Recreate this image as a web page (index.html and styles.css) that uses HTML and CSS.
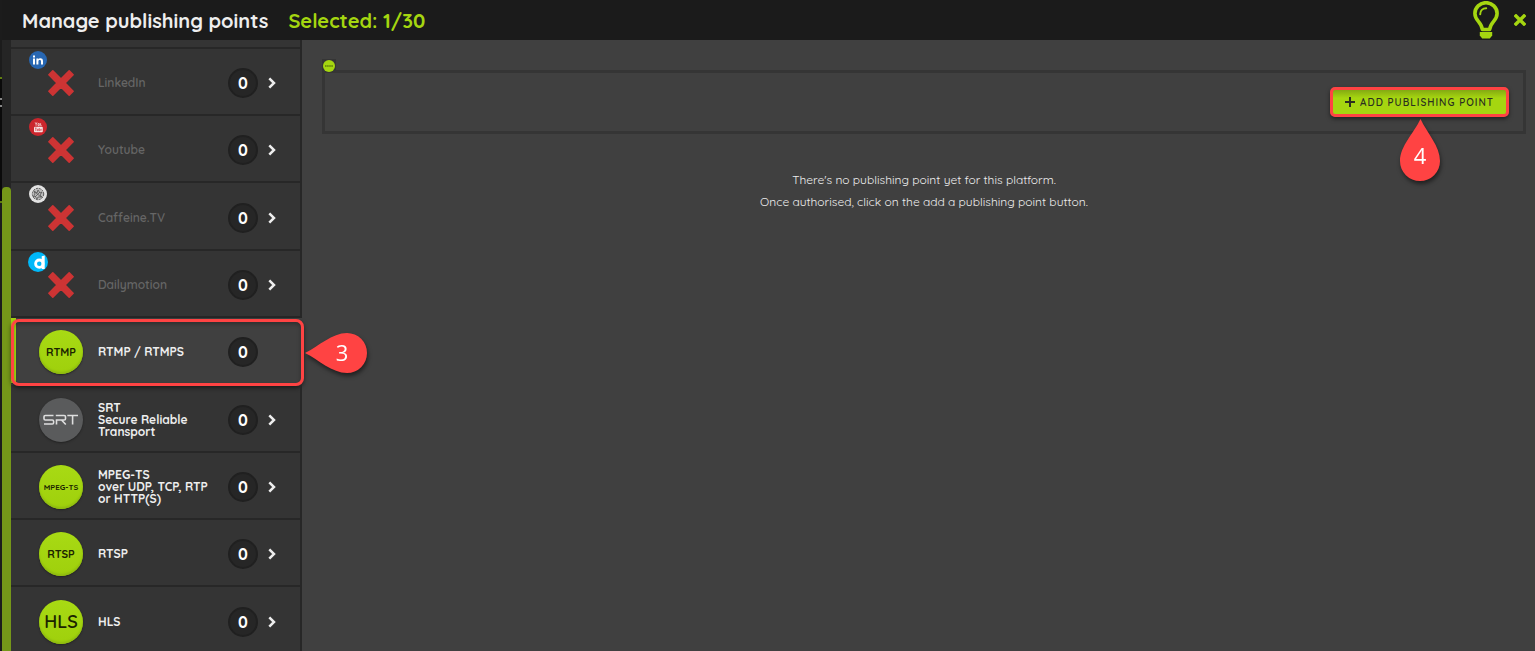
FILE: index.html
```html
<!DOCTYPE html>
<html lang="en">
<head>
  <meta charset="UTF-8">
  <meta name="viewport" content="width=device-width, initial-scale=1">
  <title>Manage publishing points</title>
  <link rel="stylesheet" href="styles.css">
</head>
<body>
  <!-- Shared icons -->
  <svg class="defs" aria-hidden="true">
    <symbol id="cross" viewBox="0 0 26 26">
      <path d="M4.8.9 13 9 21.2.9 25.1 4.8 17 13 25.1 21.2 21.2 25.1 13 17 4.8 25.1.9 21.2 9 13 .9 4.8Z" fill="#cd3434" stroke="#cd3434" stroke-width="1.6" stroke-linejoin="round"/>
    </symbol>
    <symbol id="chevron" viewBox="0 0 8 12">
      <path d="M1.3 1.3 6 6 1.3 10.7" fill="none" stroke="currentColor" stroke-width="2.5"/>
    </symbol>
  </svg>

  <div class="backdrop"></div>
  <div class="dialog">
    <header class="header">
      <h1>Manage publishing points</h1>
      <span class="selected-count">Selected: 1/30</span>
      <button class="icon-btn help" aria-label="Help">
        <svg width="26" height="38" viewBox="0 0 26 38">
          <path d="M9.3 28.5C8.8 21 1.9 20 1.9 12.4a11.1 10.7 0 0 1 22.2 0C24.1 20 17.2 21 16.7 28.5Z" fill="none" stroke="currentColor" stroke-width="3.6" stroke-linejoin="round"/>
          <path d="M7.2 13.2c0-3.4 2.4-5.8 6-5.9" fill="none" stroke="currentColor" stroke-width="2" stroke-linecap="round"/>
          <path d="M6.8 31h12.4v3.4l-2.4 3.2H9.2l-2.4-3.2Z" fill="currentColor"/>
        </svg>
      </button>
      <button class="icon-btn close" aria-label="Close">
        <svg width="12" height="12" viewBox="0 0 12 12">
          <path d="M2 2l8 8M10 2l-8 8" fill="none" stroke="currentColor" stroke-width="3.4" stroke-linecap="square"/>
        </svg>
      </button>
    </header>

    <div class="content">
      <div class="scrollbar"><div class="thumb"></div></div>

      <!-- Platform list -->
      <nav class="platforms">
        <div class="list-top"></div>
        <button class="platform disabled">
          <svg class="brand" viewBox="0 0 18 18">
            <circle cx="9" cy="9" r="9" fill="#2867b2"/>
            <path d="M4 7.4h2v6H4zM4 4.6h2v1.8H4zM7.4 7.4h1.9v.9c.9-1.5 4.7-1.7 4.7 1.6v3.5h-2v-3c0-2-2.6-1.8-2.6 0v3h-2z" fill="#fff"/>
          </svg>
          <span class="logo"><svg class="cross"><use href="#cross"/></svg></span>
          <span class="name">LinkedIn</span>
          <span class="count">0</span>
          <svg class="chevron"><use href="#chevron"/></svg>
        </button>
        <button class="platform disabled">
          <svg class="brand" viewBox="0 0 18 18">
            <circle cx="9" cy="9" r="9" fill="#cb262d"/>
            <path d="M6.2 4.4l.9 1.7v1.7M8 4.4l-.9 1.7M9 5.6h1.3v2H9zM11.6 5.2v2.4h1" fill="none" stroke="#f6dcdc" stroke-width=".8"/>
            <rect x="5" y="8.7" width="8.8" height="5.5" rx="1" fill="#f6e4e4"/>
            <path d="M6 10h1.6M6.8 10v3M8.4 10.8v1.8h.9v-1.8M10.3 10v2.6h.9v-1.4M12.2 10.8v1.8" fill="none" stroke="#cb262d" stroke-width=".6"/>
          </svg>
          <span class="logo"><svg class="cross"><use href="#cross"/></svg></span>
          <span class="name">Youtube</span>
          <span class="count">0</span>
          <svg class="chevron"><use href="#chevron"/></svg>
        </button>
        <button class="platform disabled">
          <svg class="brand" viewBox="0 0 18 18">
            <circle cx="9" cy="9" r="9" fill="#e2e2e2"/>
            <circle cx="9" cy="9" r="5.7" fill="#bbb" stroke="#555" stroke-width="1" stroke-dasharray="2 1"/>
            <path d="M5 6l3 2 1-3 2 3 2-1-2 3 2 2-4 0-1 2-2-3-2 1 2-3zM6 12l5-5M6 7l6 5" fill="none" stroke="#555" stroke-width=".8"/>
          </svg>
          <span class="logo"><svg class="cross"><use href="#cross"/></svg></span>
          <span class="name">Caffeine.TV</span>
          <span class="count">0</span>
          <svg class="chevron"><use href="#chevron"/></svg>
        </button>
        <button class="platform disabled">
          <svg class="brand large" viewBox="0 0 20 20">
            <circle cx="10" cy="10" r="10" fill="#00b8f9"/>
            <circle cx="11.3" cy="11.7" r="3.7" fill="none" stroke="#fff" stroke-width="2.8"/>
            <path d="M13.7 4.2l3-.6v13.4h-3z" fill="#fff"/>
          </svg>
          <span class="logo"><svg class="cross"><use href="#cross"/></svg></span>
          <span class="name">Dailymotion</span>
          <span class="count">0</span>
          <svg class="chevron"><use href="#chevron"/></svg>
        </button>
        <button class="platform active">
          <span class="logo round">RTMP</span>
          <span class="name">RTMP / RTMPS</span>
          <span class="count">0</span>
          <span class="outline"></span>
          <span class="callout left">
            <svg width="62" height="40" viewBox="0 0 62 40">
              <path d="M0 20C14 13 27 0 42 0a20 20 0 0 1 0 40C27 40 14 27 0 20Z" fill="#ff4343"/>
            </svg>
            <span class="step">3</span>
          </span>
        </button>
        <button class="platform">
          <span class="logo round grey">
            <svg width="36" height="12" viewBox="0 0 36 12">
              <path d="M10.5 1.5H2.3q-1.3 0-1.3 1.3v1.9Q1 6 2.3 6h7q1.3 0 1.3 1.3v1.4q0 1.3-1.3 1.3H1M13.5 10.5V6h7.7q1.3 0 1.3-1.3V2.8q0-1.3-1.3-1.3h-8.4M18.5 6l4.3 4.5M24.3 1.5H35M29.6 1.5v9" fill="none" stroke="#dedede" stroke-width="1.6"/>
            </svg>
          </span>
          <span class="name">SRT<br>Secure Reliable<br>Transport</span>
          <span class="count">0</span>
          <svg class="chevron"><use href="#chevron"/></svg>
        </button>
        <button class="platform">
          <span class="logo round small">MPEG-TS</span>
          <span class="name">MPEG-TS<br>over UDP, TCP, RTP<br>or HTTP(S)</span>
          <span class="count">0</span>
          <svg class="chevron"><use href="#chevron"/></svg>
        </button>
        <button class="platform">
          <span class="logo round">RTSP</span>
          <span class="name">RTSP</span>
          <span class="count">0</span>
          <svg class="chevron"><use href="#chevron"/></svg>
        </button>
        <button class="platform">
          <span class="logo round big">HLS</span>
          <span class="name">HLS</span>
          <span class="count">0</span>
          <svg class="chevron"><use href="#chevron"/></svg>
        </button>
      </nav>

      <!-- Publishing points of the selected platform -->
      <main class="points">
        <div class="toolbar">
          <svg class="tab" viewBox="0 0 14 14">
            <circle cx="7" cy="7" r="6" fill="#a5d610"/>
            <path d="M3 7h8" stroke="#5f7d08" stroke-width="1.6" stroke-dasharray="1.6 .5"/>
          </svg>
          <button class="add-btn">
            <svg width="10" height="10" viewBox="0 0 10 10"><path d="M5 0v10M0 5h10" stroke="currentColor" stroke-width="2"/></svg>
            Add publishing point
            <span class="callout below">
              <svg width="40" height="62" viewBox="0 0 40 62">
                <path d="M20.5 0C27 14 40 27 40 42a20 20 0 0 1-40 0C0 27 14 14 20.5 0Z" fill="#ff4343"/>
              </svg>
              <span class="step">4</span>
            </span>
          </button>
        </div>
        <div class="empty">
          <p>There's no publishing point yet for this platform.</p>
          <p>Once authorised, click on the add a publishing point button.</p>
        </div>
      </main>
    </div>
  </div>
</body>
</html>
```

FILE: styles.css
```css
* {
  box-sizing: border-box;
}
body {
  margin: 0;
  height: 100vh;
  display: flex;
  overflow: hidden;
  background: #404040;
  color: #eee;
  font-family: Quicksand, Lato, sans-serif;
}
button {
  border: none;
  background: none;
  padding: 0;
  color: inherit;
  font: inherit;
  cursor: pointer;
}
.defs {
  position: absolute;
  width: 0;
  height: 0;
}

/* Page behind the dialog */
.backdrop {
  width: 2px;
  background: linear-gradient(#1c1c1c 77px, #5f7d10 77px 79px, #0a0a0a 79px 98px, #888 98px 100px, #0a0a0a 100px 105px, #888 105px 107px, #0a0a0a 107px 201px, #5f7d10 201px 203px, #1c1c1c 203px);
}
.dialog {
  flex: 1;
  display: flex;
  flex-direction: column;
  min-width: 0;
}

/* Header */
.header {
  height: 40px;
  flex: none;
  display: flex;
  align-items: center;
  gap: 15px;
  padding: 0 9px 0 20px;
  background: #1b1b1b;
  font-size: 20px;
}
.header h1 {
  margin: 0 5px 0 0;
  font-size: inherit;
  font-weight: bold;
}
.selected-count {
  color: #a5d610;
  font-weight: bold;
}
.icon-btn {
  display: flex;
  color: #a5d610;
}
.help {
  margin-left: auto;
}

.content {
  flex: 1;
  display: flex;
  min-height: 0;
}
.scrollbar {
  width: 9px;
  padding-top: 147px;
  background: #252525;
}
.thumb {
  height: 100%;
  border-radius: 4px 4px 0 0;
  background: #759719;
}

/* Platform list */
.platforms {
  width: 291px;
  flex: none;
  background: #343434;
}
.list-top {
  height: 9px;
  border-right: 2px solid #272727;
  border-bottom: 2px solid #272727;
}
.platform {
  position: relative;
  display: flex;
  align-items: center;
  width: 100%;
  height: 67px;
  padding: 3px 0 0 28px;
  border-right: 2px solid #272727;
  border-bottom: 2px solid #272727;
  text-align: left;
}
.platform:nth-child(3n + 1) {
  height: 68px;
}
.logo {
  width: 44px;
  height: 44px;
  display: flex;
  align-items: center;
  justify-content: center;
}
.round {
  border-radius: 50%;
  background: linear-gradient(#a8da14, #9fd00c);
  box-shadow: inset 0 -2px 2px #8fbb10, 0 1px 2px #222;
  color: #1b2400;
  font-size: 11px;
  font-weight: bold;
}
.round.small {
  font-size: 8px;
}
.round.big {
  font-size: 18px;
  font-weight: 600;
}
.round.grey {
  background: #5a5b5c;
  box-shadow: 0 1px 2px #222;
}
.cross {
  width: 26px;
  height: 26px;
}
.brand {
  position: absolute;
  top: 2px;
  left: 18px;
  width: 18px;
  height: 18px;
}
.brand.large {
  top: 1px;
  left: 17px;
  width: 20px;
  height: 20px;
}
.name {
  width: 145px;
  padding-left: 15px;
  font-size: 12px;
  line-height: 12px;
  font-weight: bold;
  white-space: nowrap;
}
.disabled .name {
  color: #666;
  font-weight: 600;
}
.count {
  width: 30px;
  height: 30px;
  margin-right: 10px;
  border: 2px solid #202020;
  border-radius: 50%;
  background: #262626;
  color: #fff;
  font-size: 16px;
  line-height: 26px;
  font-weight: bold;
  text-align: center;
}
.chevron {
  width: 8px;
  height: 12px;
}
.active {
  border-color: transparent;
  background: #404040;
  box-shadow: inset 5px 0 #a5d610;
}

/* Tutorial marks */
.outline {
  position: absolute;
  inset: 1px -4px -3px 0;
  border: 3px solid #ff4343;
  border-radius: 8px;
  box-shadow: 0 2px 4px rgba(0, 0, 0, 0.5), inset 0 2px 4px rgba(0, 0, 0, 0.3);
}
.callout {
  position: absolute;
  z-index: 1;
  filter: drop-shadow(1px 3px 2px rgba(0, 0, 0, 0.5));
}
.callout svg {
  display: block;
}
.callout.left {
  left: 294px;
  top: 15px;
}
.callout.below {
  left: 67px;
  top: 29px;
}
.step {
  position: absolute;
  color: #fff;
  font: 22px/38px "Open Sans", sans-serif;
  letter-spacing: normal;
  width: 40px;
  text-align: center;
}
.left .step {
  top: 0;
  left: 17px;
}
.below .step {
  top: 17px;
  left: 0;
}

/* Publishing points */
.points {
  flex: 1;
  padding: 30px 9px 0 20px;
}
.toolbar {
  position: relative;
  display: flex;
  align-items: center;
  justify-content: flex-end;
  height: 64px;
  padding-right: 14px;
  border: 3px solid #353535;
}
.tab {
  position: absolute;
  top: -14px;
  left: -3px;
  width: 14px;
  height: 14px;
  background: #353535;
}
.add-btn {
  position: relative;
  display: flex;
  align-items: center;
  gap: 5px;
  height: 30px;
  padding: 0 12px;
  border: 3px solid #ff4343;
  border-radius: 5px;
  background: linear-gradient(#84aa12, #a5d610 8px);
  box-shadow: 0 2px 4px rgba(0, 0, 0, 0.5);
  color: #2b2f20;
  font-size: 10px;
  font-weight: 600;
  letter-spacing: 1px;
  text-transform: uppercase;
}
.empty {
  padding-top: 35px;
  font-size: 12px;
  line-height: 22px;
  text-align: center;
}
.empty p {
  margin: 0;
}
```
